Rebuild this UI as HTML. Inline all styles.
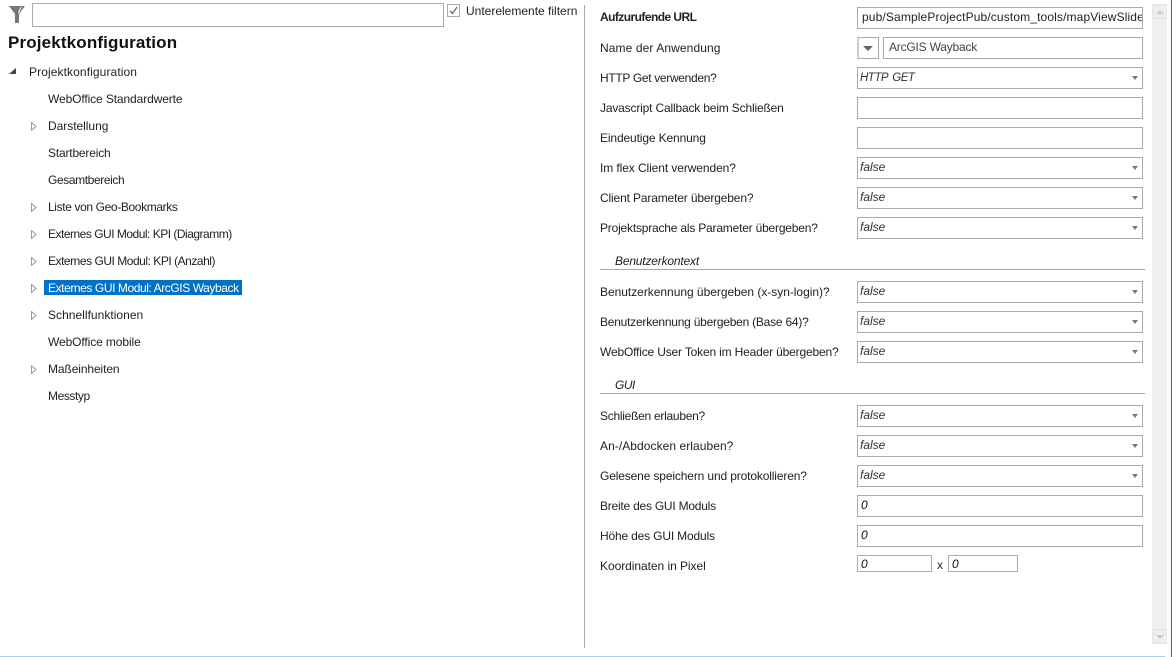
<!DOCTYPE html>
<html><head><meta charset="utf-8"><style>
html,body{margin:0;padding:0;background:#fff}
body{width:1172px;height:657px;position:relative;overflow:hidden;font:12px "Liberation Sans",sans-serif;color:#222}
.t{position:absolute;white-space:nowrap;line-height:16px}
.b{position:absolute;box-sizing:border-box;border:1px solid #ababab;background:#fff;left:857px;width:286px;height:22px;white-space:nowrap;overflow:hidden;line-height:19px;padding-left:2px;font-style:italic;color:#333}
.d:after{content:"";position:absolute;right:4px;top:8px;border-left:3px solid transparent;border-right:3px solid transparent;border-top:4px solid #777}
.a{position:absolute;left:31px}
.h{position:absolute;left:600px;width:545px;height:1px;background:#a8a8a8}
</style></head><body>
<svg style="position:absolute;left:9px;top:6px" width="16" height="17"><path d="M0 0H16L10 8V17H6V8Z" fill="#777"/><path d="M12 1L9.5 7" stroke="#ddd" stroke-width="1.5"/></svg>
<div class="b" style="left:32px;top:3px;width:412px;height:24px"></div>
<div style="position:absolute;box-sizing:border-box;left:447px;top:4px;width:13px;height:13px;border:1px solid #aaa"></div>
<svg style="position:absolute;left:449px;top:6px" width="9" height="9"><path d="M1 5L3.5 7.5L8 1" fill="none" stroke="#777" stroke-width="1.5"/></svg>
<div class="t" style="left:466px;top:3px">Unterelemente filtern</div>
<div class="t" style="left:8px;top:34px;font-size:17px;font-weight:bold;line-height:18px;color:#111;letter-spacing:.15px">Projektkonfiguration</div>

<svg style="position:absolute;left:9px;top:68px" width="8" height="7"><path d="M7 0V6H0Z" fill="#444"/></svg>
<div class="t" style="left:29px;top:64px;letter-spacing:.1px">Projektkonfiguration</div>
<div class="t" style="left:48px;top:91px;letter-spacing:-.11px">WebOffice Standardwerte</div>
<svg class="a" style="top:122px" width="6" height="9"><path d="M.5 .5L5 4.5L.5 8.5Z" fill="#fff" stroke="#999"/></svg><div class="t" style="left:48px;top:118px;letter-spacing:-.03px">Darstellung</div>
<div class="t" style="left:48px;top:145px;letter-spacing:-.18px">Startbereich</div>
<div class="t" style="left:48px;top:172px;letter-spacing:-.39px">Gesamtbereich</div>
<svg class="a" style="top:203px" width="6" height="9"><path d="M.5 .5L5 4.5L.5 8.5Z" fill="#fff" stroke="#999"/></svg><div class="t" style="left:48px;top:199px;letter-spacing:-.37px">Liste von Geo-Bookmarks</div>
<svg class="a" style="top:230px" width="6" height="9"><path d="M.5 .5L5 4.5L.5 8.5Z" fill="#fff" stroke="#999"/></svg><div class="t" style="left:48px;top:226px;letter-spacing:-.5px">Externes GUI Modul: KPI (Diagramm)</div>
<svg class="a" style="top:257px" width="6" height="9"><path d="M.5 .5L5 4.5L.5 8.5Z" fill="#fff" stroke="#999"/></svg><div class="t" style="left:48px;top:253px;letter-spacing:-.47px">Externes GUI Modul: KPI (Anzahl)</div>
<svg class="a" style="top:284px" width="6" height="9"><path d="M.5 .5L5 4.5L.5 8.5Z" fill="#fff" stroke="#999"/></svg>
<div style="position:absolute;left:44px;top:280px;width:198px;height:15px;background:#0072c6"></div>
<div class="t" style="left:48px;top:280px;color:#fff;letter-spacing:-.42px">Externes GUI Modul: ArcGIS Wayback</div>
<svg class="a" style="top:311px" width="6" height="9"><path d="M.5 .5L5 4.5L.5 8.5Z" fill="#fff" stroke="#999"/></svg><div class="t" style="left:48px;top:307px;letter-spacing:.03px">Schnellfunktionen</div>
<div class="t" style="left:48px;top:334px;letter-spacing:-.1px">WebOffice mobile</div>
<svg class="a" style="top:365px" width="6" height="9"><path d="M.5 .5L5 4.5L.5 8.5Z" fill="#fff" stroke="#999"/></svg><div class="t" style="left:48px;top:361px;letter-spacing:-.1px">Maßeinheiten</div>
<div class="t" style="left:48px;top:388px;letter-spacing:-.42px">Messtyp</div>

<div style="position:absolute;left:584px;top:5px;width:1px;height:643px;background:#a8a8a8"></div>

<div class="t" style="left:600px;top:9px;font-weight:bold;letter-spacing:-.56px">Aufzurufende URL</div>
<div class="b" style="top:7px;font-style:normal;padding-left:4px;color:#222;letter-spacing:.13px">pub/SampleProjectPub/custom_tools/mapViewSlide</div>
<div class="t" style="left:600px;top:40px;letter-spacing:.1px">Name der Anwendung</div>
<div style="position:absolute;box-sizing:border-box;left:857px;top:37px;width:22px;height:22px;border:1px solid #ababab;border-left:2px solid #ccc"></div>
<div style="position:absolute;left:863px;top:46px;border:5px solid transparent;border-top:5px solid #666;border-bottom:0"></div>
<div class="b" style="left:883px;width:260px;top:37px;font-style:normal;color:#444;padding-left:5px;letter-spacing:-.2px">ArcGIS Wayback</div>
<div class="t" style="left:600px;top:70px;letter-spacing:-.32px">HTTP Get verwenden?</div><div class="b d" style="top:67px;font-size:11.5px;line-height:20px;letter-spacing:-.5px;word-spacing:2px">HTTP GET</div>
<div class="t" style="left:600px;top:100px;letter-spacing:-.17px">Javascript Callback beim Schließen</div><div class="b" style="top:97px"></div>
<div class="t" style="left:600px;top:130px;letter-spacing:-.13px">Eindeutige Kennung</div><div class="b" style="top:127px"></div>
<div class="t" style="left:600px;top:160px;letter-spacing:-.09px">Im flex Client verwenden?</div><div class="b d" style="top:157px">false</div>
<div class="t" style="left:600px;top:190px;letter-spacing:-.15px">Client Parameter übergeben?</div><div class="b d" style="top:187px">false</div>
<div class="t" style="left:600px;top:220px;letter-spacing:-.2px">Projektsprache als Parameter übergeben?</div><div class="b d" style="top:217px">false</div>

<div class="t" style="left:615px;top:253px;font-style:italic;letter-spacing:-.18px">Benutzerkontext</div><div class="h" style="top:269px"></div>
<div class="t" style="left:600px;top:284px;letter-spacing:-.03px">Benutzerkennung übergeben (x-syn-login)?</div><div class="b d" style="top:281px">false</div>
<div class="t" style="left:600px;top:314px;letter-spacing:-.23px">Benutzerkennung übergeben (Base 64)?</div><div class="b d" style="top:311px">false</div>
<div class="t" style="left:600px;top:344px;letter-spacing:-.17px">WebOffice User Token im Header übergeben?</div><div class="b d" style="top:341px">false</div>

<div class="t" style="left:615px;top:377px;font-style:italic;letter-spacing:-.5px">GUI</div><div class="h" style="top:393px"></div>
<div class="t" style="left:600px;top:408px;letter-spacing:-.27px">Schließen erlauben?</div><div class="b d" style="top:405px">false</div>
<div class="t" style="left:600px;top:438px;letter-spacing:.06px">An-/Abdocken erlauben?</div><div class="b d" style="top:435px">false</div>
<div class="t" style="left:600px;top:468px;letter-spacing:-.14px">Gelesene speichern und protokollieren?</div><div class="b d" style="top:465px">false</div>
<div class="t" style="left:600px;top:498px;letter-spacing:-.23px">Breite des GUI Moduls</div><div class="b" style="top:495px;color:#111;padding-left:3px">0</div>
<div class="t" style="left:600px;top:528px;letter-spacing:-.17px">Höhe des GUI Moduls</div><div class="b" style="top:525px;color:#111;padding-left:3px">0</div>
<div class="t" style="left:600px;top:558px;letter-spacing:-.05px">Koordinaten in Pixel</div>
<div class="b" style="top:555px;width:75px;height:17px;line-height:16px;color:#111;padding-left:3px">0</div>
<div class="t" style="left:937px;top:557px">x</div>
<div class="b" style="left:948px;top:555px;width:70px;height:17px;line-height:16px;color:#111;padding-left:3px">0</div>

<div style="position:absolute;left:1152px;top:4px;width:15px;height:640px;background:#f0f0f0"></div>
<div style="position:absolute;box-sizing:border-box;left:1152px;top:4px;width:15px;height:15px;border:1px solid #e4e4e4;background:#eee"></div>
<div style="position:absolute;left:1156px;top:10px;border:4px solid transparent;border-bottom:4px solid #ccc;border-top:0"></div>
<div style="position:absolute;box-sizing:border-box;left:1152px;top:629px;width:15px;height:15px;border:1px solid #e4e4e4;background:#eee"></div>
<div style="position:absolute;left:1156px;top:635px;border:4px solid transparent;border-top:4px solid #ccc;border-bottom:0"></div>
<div style="position:absolute;left:0;top:656px;width:1165px;height:1px;background:#a6cfec"></div>
<div style="position:absolute;left:1171px;top:0;width:1px;height:657px;background:#1a6fb5"></div>
</body></html>
